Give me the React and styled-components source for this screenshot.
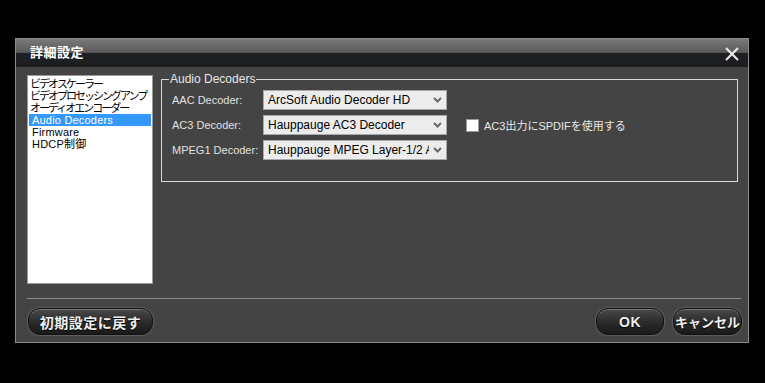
import React from 'react';
import styled, { createGlobalStyle } from 'styled-components';

const GlobalStyle = createGlobalStyle`
  html, body {
    margin: 0;
    padding: 0;
    background: #000;
    width: 765px;
    height: 383px;
    overflow: hidden;
  }
  * { box-sizing: border-box; }
`;

const JP = `"Liberation Sans", "Noto Sans CJK JP", sans-serif`;

const Dialog = styled.div`
  margin: 38px 0 0 15px;
  width: 734px;
  height: 305px;
  background: #444444;
  border: 1px solid #8a8a8a;
  display: flex;
  flex-direction: column;
  font-family: ${JP};
`;

const TitleBar = styled.div`
  height: 28px;
  flex: none;
  display: flex;
  align-items: center;
  justify-content: space-between;
  padding: 0 6px 0 14px;
  background: linear-gradient(to bottom, #7a7a7a 0%, #5a5a5a 48%, #1e2024 50%, #1b1d21 100%);
`;

const Title = styled.span`
  color: #fff;
  font-size: 13px;
  font-weight: bold;
  letter-spacing: 0.5px;
  margin-top: -3px;
`;

const CloseIcon = styled.svg`
  width: 16px;
  height: 16px;
  margin-top: 1px;
  margin-right: 2px;
`;

const Body = styled.div`
  flex: 1;
  display: flex;
  gap: 8px;
  padding: 8px 10px 14px 11px;
`;

const ListBox = styled.div`
  width: 126px;
  height: 209px;
  flex: none;
  background: #fff;
  border: 1px solid #9a9a9a;
  padding: 2px 1px;
  display: flex;
  flex-direction: column;
`;

const ListItem = styled.div`
  height: 12px;
  line-height: 12px;
  font-size: 11px;
  letter-spacing: ${p => (p.$jp ? '-2px' : '0.2px')};
  padding-left: ${p => (p.$jp ? '1px' : '3px')};
  white-space: nowrap;
  overflow: hidden;
  color: ${p => (p.$selected ? '#fff' : '#000')};
  background: ${p => (p.$selected ? '#3399ff' : 'transparent')};
`;

const Group = styled.fieldset`
  margin: -2px 0 0 0;
  padding: 5px 10px 0 10px;
  width: 577px;
  height: 109px;
  border: 1px solid #d8d8d8;
  display: grid;
  grid-template-columns: 91px 184px auto;
  grid-auto-rows: 20px;
  row-gap: 5px;
  align-items: center;
  align-content: start;
`;

const Legend = styled.legend`
  color: #e6e6e6;
  font-size: 12px;
  line-height: 12px;
  padding: 0 1px;
  margin-left: -3px;
`;

const Label = styled.span`
  color: #e0e0e0;
  font-size: 11px;
  white-space: nowrap;
`;

const Select = styled.div`
  height: 20px;
  background: #ececec;
  border: 1px solid #a8a8a8;
  display: flex;
  align-items: center;
  padding: 0 4px 0 4px;
  gap: 4px;
`;

const SelectText = styled.span`
  flex: 1;
  color: #000;
  font-size: 12px;
  white-space: nowrap;
  overflow: hidden;
`;

const Chevron = styled.svg`
  width: 9px;
  height: 6px;
  flex: none;
`;

const CheckRow = styled.label`
  display: flex;
  align-items: center;
  gap: 5px;
  margin-left: 19px;
  color: #e6e6e6;
  font-size: 11px;
  white-space: nowrap;
`;

const CheckBox = styled.span`
  width: 13px;
  height: 13px;
  background: #fff;
  border: 1px solid #9a9a9a;
`;

const Separator = styled.div`
  height: 1px;
  flex: none;
  margin: 0 7px 0 11px;
  background: #8a8a8a;
`;

const Footer = styled.div`
  display: flex;
  align-items: flex-start;
  padding: 9px 6px 0 12px;
  gap: 9px;
  height: 43px;
`;

const Button = styled.button`
  height: 27px;
  width: ${p => p.$w}px;
  border-radius: 12px;
  border: 1px solid #111;
  box-shadow: 0 0 0 1px #5c5c5c, inset 0 1px 0 rgba(255, 255, 255, 0.25);
  background: linear-gradient(to bottom, #4a4a4a 0%, #2c2c2c 50%, #1a1a1a 100%);
  color: #f0f0f0;
  font-family: ${JP};
  font-size: ${p => p.$fs || 14}px;
  font-weight: bold;
  letter-spacing: ${p => (p.$fs ? 0 : 0.5)}px;
  text-shadow: 0 1px 1px #000;
  padding: 0;
  cursor: pointer;
`;

const Spacer = styled.div`
  flex: 1;
`;

const ChevronIcon = () => (
  <Chevron viewBox="0 0 9 6">
    <path d="M1 1 L4.5 4.5 L8 1" fill="none" stroke="#6a6a6a" strokeWidth="2" />
  </Chevron>
);

const items = [
  { text: 'ビデオスケーラー', jp: true },
  { text: 'ビデオプロセッシングアンプ', jp: true },
  { text: 'オーディオエンコーダー', jp: true },
  { text: 'Audio Decoders', selected: true },
  { text: 'Firmware' },
  { text: 'HDCP制御' },
];

const decoders = [
  { label: 'AAC Decoder:', value: 'ArcSoft Audio Decoder HD' },
  { label: 'AC3 Decoder:', value: 'Hauppauge AC3 Decoder', spdif: true },
  { label: 'MPEG1 Decoder:', value: 'Hauppauge MPEG Layer-1/2 Audio Decoder' },
];

export default function App() {
  return (
    <>
      <GlobalStyle />
      <Dialog>
        <TitleBar>
          <Title>詳細設定</Title>
          <CloseIcon viewBox="0 0 16 16">
            <path d="M2 2 L14 14 M14 2 L2 14" stroke="#e8e8e8" strokeWidth="2.2" />
          </CloseIcon>
        </TitleBar>
        <Body>
          <ListBox>
            {items.map(it => (
              <ListItem key={it.text} $jp={it.jp} $selected={it.selected}>
                {it.text}
              </ListItem>
            ))}
          </ListBox>
          <Group>
            <Legend>Audio Decoders</Legend>
            {decoders.map(d => (
              <React.Fragment key={d.label}>
                <Label>{d.label}</Label>
                <Select>
                  <SelectText>{d.value}</SelectText>
                  <ChevronIcon />
                </Select>
                {d.spdif ? (
                  <CheckRow>
                    <CheckBox />
                    AC3出力にSPDIFを使用する
                  </CheckRow>
                ) : (
                  <span />
                )}
              </React.Fragment>
            ))}
          </Group>
        </Body>
        <Separator />
        <Footer>
          <Button $w={125}>初期設定に戻す</Button>
          <Spacer />
          <Button $w={68}>OK</Button>
          <Button $w={69} $fs={13}>キャンセル</Button>
        </Footer>
      </Dialog>
    </>
  );
}
